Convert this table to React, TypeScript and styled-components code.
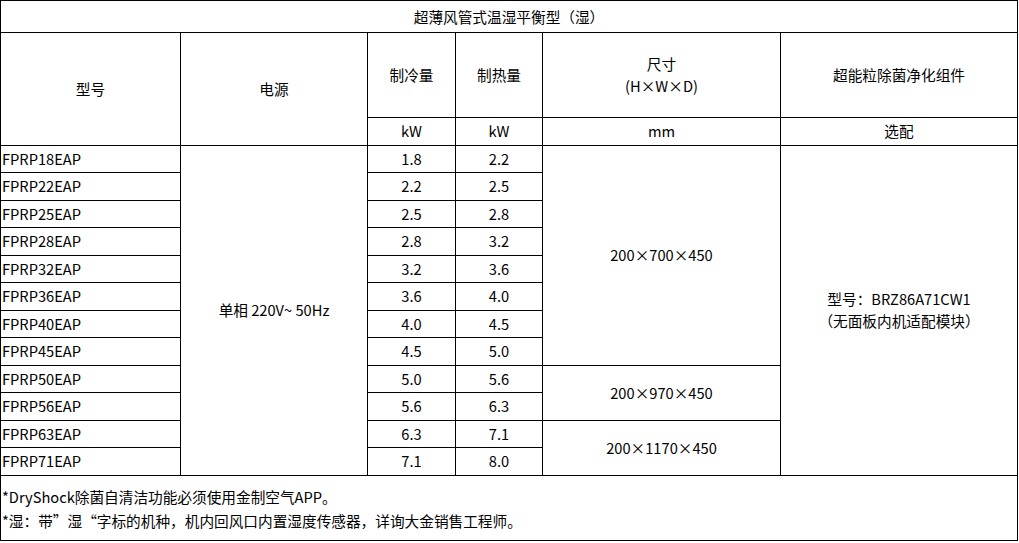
import React from "react";
import styled, { createGlobalStyle } from "styled-components";

const GlobalStyle = createGlobalStyle`
  html, body {
    margin: 0;
    padding: 0;
    background: #fff;
  }
  body {
    font-family: "Noto Sans CJK SC", "Noto Sans", sans-serif;
    color: #000;
  }
`;

type Row = { model: string; cool: string; heat: string };

const rows: Row[] = [
  { model: "FPRP18EAP", cool: "1.8", heat: "2.2" },
  { model: "FPRP22EAP", cool: "2.2", heat: "2.5" },
  { model: "FPRP25EAP", cool: "2.5", heat: "2.8" },
  { model: "FPRP28EAP", cool: "2.8", heat: "3.2" },
  { model: "FPRP32EAP", cool: "3.2", heat: "3.6" },
  { model: "FPRP36EAP", cool: "3.6", heat: "4.0" },
  { model: "FPRP40EAP", cool: "4.0", heat: "4.5" },
  { model: "FPRP45EAP", cool: "4.5", heat: "5.0" },
  { model: "FPRP50EAP", cool: "5.0", heat: "5.6" },
  { model: "FPRP56EAP", cool: "5.6", heat: "6.3" },
  { model: "FPRP63EAP", cool: "6.3", heat: "7.1" },
  { model: "FPRP71EAP", cool: "7.1", heat: "8.0" },
];

// size groups: start row index -> [rowSpan, text]
const sizes: Record<number, [number, string]> = {
  0: [8, "200×700×450"],
  8: [2, "200×970×450"],
  10: [2, "200×1170×450"],
};

const Table = styled.table`
  width: 1018px;
  table-layout: fixed;
  border-collapse: collapse;
  font-size: 14.667px;
  line-height: 22px;
`;

const Cell = styled.td<{ $left?: boolean; $h?: number }>`
  border: 1px solid #000;
  padding: ${(p) => (p.$left ? "0 1px" : "0")};
  text-align: ${(p) => (p.$left ? "left" : "center")};
  vertical-align: middle;
  height: ${(p) => (p.$h ? `${p.$h}px` : "auto")};
  white-space: nowrap;
`;

const Note = styled.div`
  line-height: 24px;
  padding-top: 2px;
`;

export default function App() {
  return (
    <>
      <GlobalStyle />
      <Table>
        <colgroup>
          <col style={{ width: 180 }} />
          <col style={{ width: 187 }} />
          <col style={{ width: 88 }} />
          <col style={{ width: 87 }} />
          <col style={{ width: 238 }} />
          <col style={{ width: 237 }} />
        </colgroup>
        <tbody>
          <tr>
            <Cell colSpan={6} $h={31}>超薄风管式温湿平衡型（湿）</Cell>
          </tr>
          <tr>
            <Cell rowSpan={2}>型号</Cell>
            <Cell rowSpan={2}>电源</Cell>
            <Cell $h={84}>制冷量</Cell>
            <Cell>制热量</Cell>
            <Cell>
              尺寸
              <br />
              (H×W×D)
            </Cell>
            <Cell>超能粒除菌净化组件</Cell>
          </tr>
          <tr>
            <Cell $h={26.5}>kW</Cell>
            <Cell>kW</Cell>
            <Cell>mm</Cell>
            <Cell>选配</Cell>
          </tr>
          {rows.map((r, i) => (
            <tr key={r.model}>
              <Cell $left $h={26.5}>{r.model}</Cell>
              {i === 0 && <Cell rowSpan={rows.length}>单相 220V~ 50Hz</Cell>}
              <Cell>{r.cool}</Cell>
              <Cell>{r.heat}</Cell>
              {sizes[i] && <Cell rowSpan={sizes[i][0]}>{sizes[i][1]}</Cell>}
              {i === 0 && (
                <Cell rowSpan={rows.length}>
                  型号：BRZ86A71CW1
                  <br />
                  （无面板内机适配模块）
                </Cell>
              )}
            </tr>
          ))}
          <tr>
            <Cell colSpan={6} $left $h={64}>
              <Note>
                *DryShock除菌自清洁功能必须使用金制空气APP。
                <br />
                *湿：带”湿“字标的机种，机内回风口内置湿度传感器，详询大金销售工程师。
              </Note>
            </Cell>
          </tr>
        </tbody>
      </Table>
    </>
  );
}
